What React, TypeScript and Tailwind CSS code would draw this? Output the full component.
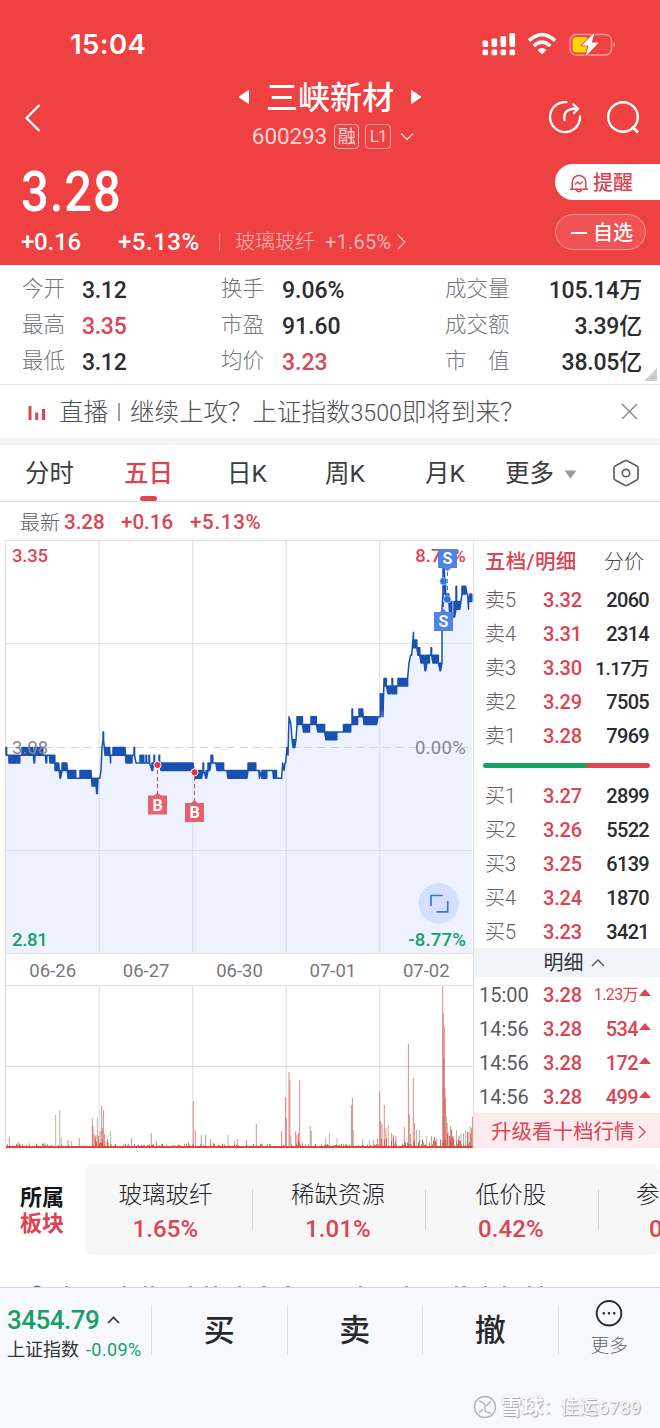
import React from "react";

interface Stat {
  label: string;
  value: string;
  up?: boolean;
}

interface Level {
  label: string;
  price: string;
  volume: string;
}

const STATS: Stat[][] = [
  [
    { label: "今开", value: "3.12" },
    { label: "换手", value: "9.06%" },
    { label: "成交量", value: "105.14万" },
  ],
  [
    { label: "最高", value: "3.35", up: true },
    { label: "市盈", value: "91.60" },
    { label: "成交额", value: "3.39亿" },
  ],
  [
    { label: "最低", value: "3.12" },
    { label: "均价", value: "3.23", up: true },
    { label: "市　值", value: "38.05亿" },
  ],
];

const SELLS: Level[] = [
  { label: "卖5", price: "3.32", volume: "2060" },
  { label: "卖4", price: "3.31", volume: "2314" },
  { label: "卖3", price: "3.30", volume: "1.17万" },
  { label: "卖2", price: "3.29", volume: "7505" },
  { label: "卖1", price: "3.28", volume: "7969" },
];

const BUYS: Level[] = [
  { label: "买1", price: "3.27", volume: "2899" },
  { label: "买2", price: "3.26", volume: "5522" },
  { label: "买3", price: "3.25", volume: "6139" },
  { label: "买4", price: "3.24", volume: "1870" },
  { label: "买5", price: "3.23", volume: "3421" },
];

const TRADES = [
  { time: "15:00", volume: "1.23万", small: true },
  { time: "14:56", volume: "534" },
  { time: "14:56", volume: "172" },
  { time: "14:56", volume: "499" },
];

const SECTORS = [
  { name: "玻璃玻纤", change: "1.65%" },
  { name: "稀缺资源", change: "1.01%" },
  { name: "低价股", change: "0.42%" },
];

// [x start, x end, low tick, high tick]; one tick is 0.01 away from 3.08
const SEGMENTS: number[][] = [
  [6, 7, -1, 0], [7, 9, -1, -1], [9, 20, -2, -1], [20, 22, -1, -1], [22, 27, -1, 0],
  [28, 33, -1, 0], [34, 34.6, -2, -1], [35, 43, -1, 0], [43, 46, -1, -1], [46, 46.6, -2, -1],
  [47, 50, -1, -1], [50, 55, -2, -1], [55, 59, -3, -2], [60, 61, -4, -3], [62, 67, -3, -2],
  [68, 76, -4, -3], [76, 80, -4, -4], [80, 84, -4, -3], [85, 91, -4, -3], [92, 96, -5, -4],
  [96.7, 97.4, -6, -4], [98, 100, -4, -4], [101, 101, -3, -3], [102, 102, 0, 0],
  [103, 104, 1, 2], [105, 106, -1, 0], [106, 110, -1, 0], [110.6, 111, -2, -1], [113, 125, -1, 0],
  [126, 132, -2, -1], [134, 135, -1, 0], [136, 139, -2, -2], [140, 141, -2, -1], [142, 144, -2, -1],
  [146, 147, -2, -1], [149, 150, -2, -1], [152, 153, -3, -2], [154, 155, -2, -1], [157, 158, -2, -2],
  [159, 160, -2, -1], [161, 165, -3, -2], [166, 169, -3, -2], [170, 174, -3, -2], [175, 193, -3, -2],
  [195, 202, -4, -3], [203, 204, -3, -2], [206, 206.6, -4, -3], [208, 210, -3, -2], [211, 213, -2, -1],
  [214, 216, -2, -2], [217, 224, -3, -2], [225, 227, -3, -3], [228, 237, -4, -3], [238, 243, -4, -3],
  [244, 247, -4, -3], [248, 256, -3, -2], [257, 259, -3, -3], [259.5, 260, -4, -3], [262, 267, -4, -3],
  [268, 273, -3, -3], [273.5, 277, -4, -3], [278, 282, -4, -4], [282.7, 283, -2, -2], [284, 284, -3, -3],
  [285, 286, -2, -2], [287, 287, 0, 0], [288, 288, -1, -1], [289, 289, 4, 4], [291, 291, 3, 3],
  [292, 292, 1, 1], [293, 295, 0, 1], [296, 296, 1, 1], [297, 303, 3, 4], [303.5, 310, 2, 3],
  [311, 317, 3, 4], [318, 325, 2, 3], [326, 331, 1, 2], [332, 337, 1, 2], [338, 343, 2, 2],
  [343.5, 351, 2, 3], [352, 352.6, 3, 5], [354, 358, 3, 4], [359, 363, 4, 5], [364, 377, 3, 4],
  [378, 379, 4, 4], [380.3, 381, 4, 7], [382, 382.6, 7, 5], [383, 383, 4, 4], [384, 387, 9, 8],
  [388, 391, 7, 8], [392, 392.6, 7, 9], [393, 397, 7, 8], [398, 408, 8, 9], [409, 409, 11, 11],
  [410.5, 412, 12, 12], [413.5, 414, 15, 13], [415, 417, 13, 14], [418, 420, 12, 13], [421, 424, 11, 12],
  [425, 426, 10, 12], [427, 430, 11, 12], [431, 431.6, 12, 13], [433, 439, 11, 12], [440, 440.6, 10, 11],
  [442, 442.4, 11, 18], [443, 444.4, 20, 24], [445, 446, 20, 22], [447, 449, 19, 20], [450, 452, 17, 19],
  [454, 454.6, 17, 19], [456, 456.6, 18, 21], [458, 460, 18, 19], [462, 466, 20, 21], [467, 468, 20, 20],
  [468.5, 469, 18, 19], [470, 472, 20, 19],
];

const tickY = (tick: number) => 207.5 - tick * 7.68;

const buildLine = () => {
  const points: string[] = [];
  SEGMENTS.forEach(([x0, x1, a, b]) => {
    let flip = false;
    for (let x = x0; x <= x1; x += 0.6) {
      points.push(`${x.toFixed(1)},${tickY(flip ? b : a).toFixed(1)}`);
      if (a !== b) {
        points.push(`${x.toFixed(1)},${tickY(flip ? a : b).toFixed(1)}`);
      }
      flip = !flip;
    }
  });
  return points.join(" ");
};

// [x, height, falling]
const SPIKES: number[][] = [
  [9.3, 11], [18.3, 6], [29.3, 5], [44.3, 5], [55.7, 33, 1], [59.7, 38, 1], [61.3, 10, 1], [68, 8], [71.3, 7, 1],
  [79.3, 10], [92.3, 30], [93, 22], [94, 14], [95, 12], [96, 13], [97.4, 30, 1], [98.5, 12], [100, 17], [101.7, 42],
  [102.3, 20], [103.4, 38], [104.5, 14], [106, 7, 1], [108, 6], [110.6, 17, 1], [131.6, 10], [151.3, 15], [156.6, 7],
  [162, 4], [188.6, 6], [193.3, 47], [195.3, 18], [201.3, 13], [205.6, 13], [210.6, 9], [213.3, 5], [228, 13, 1],
  [234.3, 7], [237.3, 9], [246.6, 8], [256.3, 24], [267.3, 4], [281.6, 17], [285.4, 51], [286.3, 30], [289, 76],
  [289.9, 68], [291, 12, 1], [295.6, 17], [297, 13], [298.5, 15], [299.7, 68], [310.3, 22], [311.4, 17, 1],
  [325.6, 10, 1], [329.3, 15, 1], [337, 10, 1], [351.6, 43], [352.4, 50], [353.3, 18, 1], [362.6, 9, 1], [369.3, 8, 1],
  [373.3, 8], [377.6, 10], [379.7, 57], [380.6, 27], [382, 24], [384.3, 43], [386, 20], [388.3, 23, 1], [391.6, 15],
  [393.3, 13], [396, 12], [404.3, 21], [408.4, 104], [409.3, 34], [410.6, 14], [413.3, 70], [414.6, 25], [416.6, 18, 1],
  [419.3, 18, 1], [426.6, 12, 1], [431.6, 12], [436.6, 10, 1], [442.7, 162], [443.3, 135], [444.3, 121], [443.8, 90],
  [444.9, 60], [445.6, 50], [446.4, 32, 1], [447.2, 25], [448.3, 15, 1], [450.6, 22], [453.3, 12], [456.6, 18, 1],
  [459, 12], [461, 14, 1], [463.5, 15, 1], [465.6, 18, 1], [468, 16], [470, 22, 1], [471.5, 20], [472.4, 31],
];

const noise = (i: number) => {
  const v = Math.sin(i * 12.9898) * 43758.5453;
  return v - Math.floor(v);
};

const noiseLevel = (x: number) => {
  if (x > 440) return 17;
  if (x > 380) return 10;
  if ((x > 92 && x < 110) || (x > 294 && x < 302)) return 9;
  return 3;
};

const PriceLine: React.FC = () => {
  const line = buildLine();
  return (
    <>
      <polygon points={`6,413 ${line} 472.5,413`} fill="#edf2fe" />
      {[99.2, 192.7, 286.2, 379.7].map((x) => (
        <path key={x} d={`M${x} 0V413.5M${x} 445.5V608`} stroke="#d5d7dd" strokeOpacity="0.8" />
      ))}
      <path d="M5.5 103.5H473M5.5 310.5H473" stroke="#d9dbe0" strokeOpacity="0.8" />
      <path d="M5.5 207.5H473" stroke="#d1d2d7" strokeDasharray="8 5" />
      <path d="M5.5 0.5H473.5V608M5.5 0.5V608M5.5 413.5H473M5.5 445.5H473M5.5 526.5H473" fill="none" stroke="#dddee2" />
      <polyline points={line} fill="none" stroke="#1a50b2" strokeWidth="1.5" strokeLinejoin="round" />
    </>
  );
};

const VolumeBars: React.FC = () => (
  <>
    {Array.from({ length: 466 }, (_, i) => {
      const x = 6.5 + i;
      const h = 1.5 + Math.pow(noise(i), 3) * noiseLevel(x);
      return (
        <path
          key={i}
          d={`M${x} 608V${608 - h}`}
          stroke={noise(i + 900) > 0.68 ? "#94a070" : "#de5650"}
          strokeWidth="0.9"
        />
      );
    })}
    {SPIKES.map(([x, h, falling]) => (
      <path
        key={x}
        d={`M${x} 608V${608 - h}`}
        stroke={falling ? "#8b9a70" : "#cf544f"}
        strokeOpacity="0.85"
        strokeWidth="0.8"
      />
    ))}
    <path d="M6 607H472.5" stroke="#dc463d" strokeWidth="1.8" />
  </>
);

const Marker: React.FC<{ x: number; y: number; letter: string; below?: boolean }> = ({ x, y, letter, below }) => {
  const isBuy = letter === "B";
  return (
    <g>
      <rect x={x - 9.5} y={y - 9.5} width="19" height="19" fill={isBuy ? "#e8606e" : "#4c84e8"} />
      <path
        d={below ? `M${x - 4} ${y + 9}h8l-4 4z` : `M${x - 4} ${y - 9}h8l-4 -3.5z`}
        fill={isBuy ? "#e8606e" : "#4c84e8"}
      />
      <text x={x} y={y + 5.5} fill="#fff" fontSize="16" fontWeight="700" textAnchor="middle" fontFamily="Roboto">
        {letter}
      </text>
    </g>
  );
};

const Chart: React.FC = () => (
  <div className="relative w-[474px] h-[608px] shrink-0 text-[18.5px] leading-[20px] font-medium">
    <svg className="block w-[474px] h-[608px]" viewBox="0 0 474 608">
      <PriceLine />
      <VolumeBars />
    </svg>
    <span className="absolute left-[12px] top-[6px] text-[#dc4452] tracking-[-0.2px]">3.35</span>
    <span className="absolute right-[8px] top-[6px] text-[#dc4452] tracking-[0.1px]">8.77%</span>
    <span className="absolute left-[12px] top-[198px] text-[#85868a] font-normal">3.08</span>
    <span className="absolute right-[8px] top-[198px] text-[#85868a] font-normal tracking-[0.3px]">0.00%</span>
    <span className="absolute left-[12px] top-[390px] text-[#16a066] tracking-[-0.3px]">2.81</span>
    <span className="absolute right-[8px] top-[390px] text-[#16a066] tracking-[0.2px]">-8.77%</span>
    <svg className="absolute left-0 top-0 w-[474px] h-[414px]" viewBox="0 0 474 414">
      <path d="M157.5 230v24M194.5 237v24" stroke="#dc4452" strokeDasharray="4 3" />
      <circle cx="157.5" cy="225" r="3.6" fill="#e5333f" stroke="#fff" />
      <circle cx="194.5" cy="232.3" r="3.6" fill="#e5333f" stroke="#fff" />
      <Marker x={157.5} y={265} letter="B" />
      <Marker x={194.5} y={272.5} letter="B" />
      <path d="M447.5 32v26" stroke="#3d78e0" strokeDasharray="4 3" />
      <path d="M443.5 20v50" stroke="#2461cc" strokeDasharray="5 2" />
      <circle cx="443.5" cy="41.3" r="3.7" fill="#2f73e0" stroke="#cfe0fb" strokeWidth="0.6" />
      <circle cx="447.3" cy="59.3" r="3.7" fill="#2f73e0" stroke="#cfe0fb" strokeWidth="0.6" />
      <Marker x={447.5} y={18.5} letter="S" below />
      <Marker x={443.5} y={81.5} letter="S" />
      <circle cx="438.7" cy="363.5" r="20.2" fill="#d4e0fc" />
      <path d="M431 366V355.5H442.5M436.5 371.8H447.7V361" fill="none" stroke="#3f74dc" strokeWidth="1.7" />
    </svg>
    <div className="absolute left-[6px] top-[415px] w-[467px] h-[32px] grid grid-cols-5 items-center text-center text-[18.5px] text-[#77787c] font-normal">
      {["06-26", "06-27", "06-30", "07-01", "07-02"].map((date) => (
        <span key={date}>{date}</span>
      ))}
    </div>
  </div>
);

const LevelRow: React.FC<{ level: Level }> = ({ level }) => (
  <div className="flex items-center h-[34px] pl-[11px] pr-[11px] text-[20px] leading-none">
    <span className="w-[58px] text-[#5f6064] font-light">{level.label}</span>
    <span className="text-[#dc4452] font-medium tracking-[-0.2px]">{level.price}</span>
    <span
      className={`ml-auto text-[#2b2c30] font-medium ${
        level.volume.includes("万") ? "text-[19px] tracking-[-0.6px]" : "tracking-[-0.7px]"
      }`}
    >
      {level.volume}
    </span>
  </div>
);

const OrderBook: React.FC = () => (
  <div className="flex flex-col w-[186px] h-[608px] border-t border-[#e2e3e6]">
    <div className="flex items-center justify-between h-[42px] pl-[11px] pr-[16px] text-[20px]">
      <span className="text-[#dc4452] font-medium text-[20.5px] tracking-[0.3px]">五档/明细</span>
      <span className="text-[#4b4c50] font-light">分价</span>
    </div>
    {SELLS.map((level) => (
      <LevelRow key={level.label} level={level} />
    ))}
    <div className="flex items-center h-[26px] pl-[9px] pr-[10px] pb-[2px]">
      <div className="h-[5px] w-[104px] rounded-l-full bg-[#16a362]" />
      <div className="h-[5px] flex-1 rounded-r-full bg-[#e04650]" />
    </div>
    {BUYS.map((level) => (
      <LevelRow key={level.label} level={level} />
    ))}
    <div className="flex items-center justify-center gap-[7px] h-[29px] -mt-[1px] pl-[14px] pt-[1px] bg-[#f0f3f8] text-[20px] leading-none text-[#333438]">
      明细
      <svg className="w-[14px] h-[8px]" viewBox="0 0 14 8">
        <path d="M1 7L7 1L13 7" fill="none" stroke="#55565a" strokeWidth="1.4" />
      </svg>
    </div>
    {TRADES.map((trade) => (
      <div key={trade.volume} className="flex items-center h-[34px] pl-[5px] pr-[9px] pt-[2px] text-[20px] leading-none">
        <span className="w-[64px] text-[#5a5b5f]">{trade.time}</span>
        <span className="text-[#dc4452] font-medium tracking-[-0.2px]">3.28</span>
        <span
          className={`ml-auto text-[#dc4452] ${
            trade.small ? "text-[16px] tracking-[-0.6px]" : "font-medium tracking-[-0.6px]"
          }`}
        >
          {trade.volume}
        </span>
        <svg className="w-[12px] h-[7px] ml-[1px] mb-[6px]" viewBox="0 0 12 7">
          <path d="M0 7L6 0L12 7Z" fill="#e04450" />
        </svg>
      </div>
    ))}
    <div className="flex items-center flex-1 pl-[17px] pt-[3px] bg-[#feebed] text-[20.5px] leading-none text-[#dc4452]">
      升级看十档行情
      <svg className="w-[8px] h-[14px] ml-[3px]" viewBox="0 0 8 14">
        <path d="M1 1L7 7L1 13" fill="none" stroke="#dc4452" strokeWidth="1.4" />
      </svg>
    </div>
  </div>
);

const StatusIcons: React.FC = () => (
  <svg className="w-[136px] h-[26px]" viewBox="0 0 136 26">
    <g fill="#fff">
      <rect x="0.500" y="9.5" width="5.6" height="6.5" rx="1.4" />
      <rect x="9.500" y="7.5" width="5.6" height="8.5" rx="1.4" />
      <rect x="18.500" y="5" width="5.6" height="11" rx="1.4" />
      <rect x="27.500" y="2" width="5.6" height="14" rx="1.4" />
      <rect x="0.500" y="18.5" width="5.6" height="5.8" rx="1.4" />
      <rect x="9.500" y="18.5" width="5.6" height="5.8" rx="1.4" />
      <rect x="18.500" y="18.5" width="5.6" height="5.8" rx="1.4" />
      <rect x="27.500" y="18.5" width="5.6" height="5.8" rx="1.4" />
    </g>
    <g fill="none" stroke="#fff" strokeWidth="3.6">
      <path d="M47 9.700Q60 -2.500 73 9.700" />
      <path d="M51.700 15Q60 7.300 68.300 15" />
    </g>
    <path d="M60 23.5L55.500 19Q60 15.2 64.500 19Z" fill="#fff" />
    <rect x="88" y="3.5" width="41.5" height="20.5" rx="6" fill="none" stroke="#f6999b" strokeWidth="1.4" />
    <path d="M131.5 10.5q3 3.2 0 6.6z" fill="#f6999b" />
    <rect x="90.5" y="6" width="16" height="15.6" rx="3.5" fill="#ffd60a" />
    <path
      d="M112.5 1.5L99.5 14.5H106.5L103.5 25.5L117 11.5H109.8Z"
      fill="#fff"
      stroke="#ef4042"
      strokeWidth="1.6"
      strokeLinejoin="round"
      paintOrder="stroke"
    />
  </svg>
);

const Header: React.FC = () => (
  <header className="h-[265px] bg-[#ef4042] text-white">
    <div className="flex items-center justify-between h-[86px] pl-[70px] pr-[42px] pt-[2px]">
      <span className="mt-[2px] font-[Inter] font-semibold text-[27.5px] leading-none tracking-[0.4px]">15:04</span>
      <StatusIcons />
    </div>

    <div className="flex items-center h-[66px] pl-[24px] pr-[20px]">
      <svg className="w-[18px] h-[30px] mt-[-3px]" viewBox="0 0 18 30">
        <path d="M15.5 2L2.5 15L15.5 28" fill="none" stroke="#fff" strokeWidth="2.3" />
      </svg>
      <div className="flex flex-1 flex-col items-center pl-[74px] pr-[4px]">
        <div className="flex items-center gap-[17px] h-[26px]">
          <svg className="w-[11px] h-[16px] mt-[-9px]" viewBox="0 0 11 16">
            <path d="M10.5 1.5v13L1 8z" fill="#fff" stroke="#fff" strokeLinejoin="round" />
          </svg>
          <h1 className="text-[32px] leading-none font-medium mt-[-8px]">三峡新材</h1>
          <svg className="w-[11px] h-[16px] mt-[-9px]" viewBox="0 0 11 16">
            <path d="M0.5 1.5v13L10 8z" fill="#fff" stroke="#fff" strokeLinejoin="round" />
          </svg>
        </div>
        <div className="flex items-center h-[26px] mt-[9px] pl-[6px] text-[#fcd6d7]">
          <span className="text-[22.5px] leading-none tracking-[-0.1px]">600293</span>
          <span className="flex items-center justify-center w-[25px] h-[25px] ml-[7px] rounded-[4px] border border-[#f8b4b5] text-[18px] leading-none">
            融
          </span>
          <span className="flex items-center justify-center w-[26px] h-[25px] ml-[6px] rounded-[4px] border border-[#f6a0a2] text-[17px] leading-none tracking-[-1px]">
            L1
          </span>
          <svg className="w-[14px] h-[9px] ml-[9px]" viewBox="0 0 14 9">
            <path d="M1 1.5L7 7.5L13 1.5" fill="none" stroke="#fcd6d7" strokeWidth="1.5" />
          </svg>
        </div>
      </div>
      <div className="flex items-center gap-[24px] mt-[-5px]">
        <svg className="w-[34px] h-[34px]" viewBox="0 0 34 34" fill="none" stroke="#fff" strokeWidth="2.3">
          <path d="M18.2 2.1A15 15 0 1 0 32 16.3" strokeLinecap="round" />
          <path d="M16.500 20C15.300 13 18.500 8.500 29 8.500" strokeLinecap="round" />
          <path d="M25.5 4.500L30 8.700L26 13" strokeLinejoin="round" strokeLinecap="round" />
        </svg>
        <svg className="w-[34px] h-[34px]" viewBox="0 0 34 34" fill="none" stroke="#fff" strokeWidth="2.4">
          <circle cx="17" cy="17" r="14.8" />
          <path d="M26 26.500L32 32.5" strokeWidth="3" />
        </svg>
      </div>
    </div>

    <div className="flex justify-between pt-[12px]">
      <div className="pl-[21px]">
        <div className="h-[54px] text-[55px] leading-[56px] font-medium tracking-[1px] origin-left scale-x-[0.89]">3.28</div>
        <div className="flex items-center h-[30px] mt-[9px] text-[24px] leading-none font-medium">
          <span className="w-[97px] tracking-[-0.2px]">+0.16</span>
          <span className="w-[101px] tracking-[0.5px]">+5.13%</span>
          <div className="flex items-center h-[18px] pl-[15px] border-l border-[#f58c8e] text-[20px] font-light text-[#f9b4b5]">
            玻璃玻纤
            <span className="ml-[10px] text-[20px] tracking-[0.2px] font-normal">+1.65%</span>
            <svg className="w-[9px] h-[16px] ml-[6px]" viewBox="0 0 9 16">
              <path d="M1 1L8 8L1 15" fill="none" stroke="#f9b4b5" strokeWidth="1.3" />
            </svg>
          </div>
        </div>
      </div>
      <div className="flex flex-col gap-[14px] w-[105px]">
        <button className="flex items-center gap-[4px] h-[36px] pl-[14px] pt-[1px] rounded-l-full bg-white text-[#dc4452] text-[20px] leading-none font-medium">
          <svg className="w-[20px] h-[20px]" viewBox="0 0 20 20" fill="none" stroke="#dc4452" strokeWidth="1.5">
            <path d="M3.2 16V9.2A6.8 6.8 0 0 1 16.8 9.2V16M1 16.2H19M7 16.5Q10 21 13 16.5" />
            <path d="M6 11.5L8.7 9L10.8 11L13.6 8.4" strokeWidth="1.3" />
          </svg>
          提醒
        </button>
        <button className="flex items-center gap-[6px] w-[91px] h-[36px] pl-[15px] pt-[1px] rounded-full border border-[#f69b9c] bg-[#f15355] text-[20px] leading-none font-medium">
          <span className="w-[16px] h-[2px] bg-white" />
          自选
        </button>
      </div>
    </div>
  </header>
);

const StatGrid: React.FC = () => (
  <section className="relative h-[120px] pt-[7px] border-b border-[#e4e5e8]">
    {STATS.map((row) => (
      <div key={row[0].label} className="flex items-center h-[36px] pl-[22px] pr-[18px] text-[21.5px] leading-none">
        {row.map((stat, i) => (
          <React.Fragment key={stat.label}>
            <span
              className={`font-light text-[#76777b] mt-[-2px] whitespace-pre ${
                i === 0 ? "w-[60px]" : i === 1 ? "w-[61px]" : ""
              }`}
            >
              {stat.label}
            </span>
            <span
              className={`text-[23px] font-medium ${stat.up ? "text-[#dc4452]" : "text-[#2b2c30]"} ${
                i === 0 ? "w-[139px] tracking-[-0.3px]" : i === 1 ? "w-[163px]" : "ml-auto tracking-[-0.2px]"
              }`}
            >
              {stat.value}
            </span>
          </React.Fragment>
        ))}
      </div>
    ))}
    <svg className="absolute right-[3px] bottom-[3px] w-[13px] h-[13px]" viewBox="0 0 13 13">
      <path d="M13 0V13H0Z" fill="#cbccd0" />
    </svg>
  </section>
);

const LiveBanner: React.FC = () => (
  <section className="flex items-center h-[53px] pl-[27px] pr-[22px]">
    <svg className="w-[20px] h-[16px] mt-[3px]" viewBox="0 0 20 16">
      <path d="M3 1V15M9.7 7.500V15M16.5 4V15" stroke="#dc4452" strokeWidth="3" />
    </svg>
    <span className="flex ml-[12px] mt-[3px] text-[24.5px] leading-none font-light text-[#4f5054] whitespace-nowrap">
      <span>直播</span>
      <span className="w-[22px] text-[20px] leading-[25px] text-center">丨</span>
      <span>
        继续上攻？上证指数<span className="text-[23.2px]">3500</span>即将到来？
      </span>
    </span>
    <svg className="w-[17px] h-[17px] ml-auto" viewBox="0 0 17 17">
      <path d="M1 1L16 16M16 1L1 16" stroke="#8b8c90" strokeWidth="1.5" />
    </svg>
  </section>
);

const PeriodTabs: React.FC = () => (
  <nav className="relative flex items-center h-[57px] pl-[25px] pt-[3px] border-b border-[#dfe0e4] text-[24.5px] leading-none text-[#3c3d41] whitespace-nowrap">
    <span className="w-[99px]">分时</span>
    <span className="w-[103px] font-medium text-[#dc4452]">五日</span>
    <span className="w-[98px]">日K</span>
    <span className="w-[100px]">周K</span>
    <span className="w-[80px]">月K</span>
    <span>更多</span>
    <svg className="w-[13px] h-[9px] ml-[10px]" viewBox="0 0 13 9">
      <path d="M0.5 0.5H12.5L6.5 8.5Z" fill="#98999d" />
    </svg>
    <svg className="w-[26px] h-[28px] ml-[36px] mt-[-4px]" viewBox="0 0 26 28" fill="none" stroke="#5f6064" strokeWidth="1.7">
      <path d="M11.8 1.7Q13 1 14.2 1.7L23.8 7Q25 7.7 25 9V19Q25 20.3 23.8 21L14.2 26.3Q13 27 11.8 26.3L2.2 21Q1 20.3 1 19V9Q1 7.7 2.2 7Z" />
      <circle cx="13" cy="14" r="3.7" />
    </svg>
    <span className="absolute left-[140px] bottom-0 w-[17px] h-[5px] rounded-full bg-[#e0434e]" />
  </nav>
);

const Sectors: React.FC = () => (
  <section className="flex h-[91px] mt-[16px]">
    <div className="w-[85px] shrink-0 pl-[20px] pt-[21px] text-[22px] leading-[26px] font-bold">
      <div className="text-[#161619]">所属</div>
      <div className="text-[#dc4452]">板块</div>
    </div>
    <div className="flex flex-1 min-w-0 overflow-hidden rounded-[8px] bg-[#f7f7f8]">
      {SECTORS.map((sector, i) => (
        <React.Fragment key={sector.name}>
          <div
            className={`flex flex-col shrink-0 items-center pt-[19px] ${i === 0 ? "w-[167px] pr-[6px]" : "w-[172px] pr-[2px]"}`}
          >
            <span className="text-[23.5px] leading-[25px] font-light text-[#222327]">{sector.name}</span>
            <span className="mt-[7px] text-[24px] leading-[28px] font-medium text-[#dc4452] tracking-[0.1px]">
              {sector.change}
            </span>
          </div>
          <div className="w-px h-[41px] mt-[25px] shrink-0 bg-[#d3d4d8]" />
        </React.Fragment>
      ))}
      <div className="w-[172px] shrink-0 pt-[19px] pl-[37px] whitespace-nowrap">
        <div className="text-[23.5px] leading-[25px] font-light text-[#222327]">参</div>
        <div className="mt-[7px] pl-[13px] text-[24px] leading-[28px] font-medium text-[#dc4452]">0</div>
      </div>
    </div>
  </section>
);

const TradeBar: React.FC = () => (
  <footer className="h-[141px] border-t border-[#d6d7db] bg-[#f8f9fe]">
    <div className="flex items-center h-[84px]">
      <div className="w-[151px] pl-[7px] pt-[10px]">
        <div className="flex items-center gap-[8px] text-[26px] leading-[30px] font-medium text-[#16a066]">
          <span className="tracking-[-0.5px]">3454.79</span>
          <svg className="w-[13px] h-[8px]" viewBox="0 0 13 8">
            <path d="M1 7L6.5 1.5L12 7" fill="none" stroke="#333438" strokeWidth="1.7" />
          </svg>
        </div>
        <div className="flex items-center gap-[7px] text-[18px] leading-[30px] text-[#333438] whitespace-nowrap">
          <span>上证指数</span>
          <span className="text-[#16a066] tracking-[0.4px]">-0.09%</span>
        </div>
      </div>
      {["买", "卖", "撤"].map((action) => (
        <button
          key={action}
          className="w-[135.5px] h-[50px] border-l border-[#dddee4] text-[31px] leading-none font-medium text-[#27282c]"
        >
          {action}
        </button>
      ))}
      <button className="flex flex-1 flex-col items-center h-[50px] border-l border-[#dddee4] text-[18.5px] leading-none font-light text-[#5f6064]">
        <svg className="w-[28px] h-[28px] mt-[-5px]" viewBox="0 0 28 28">
          <circle cx="14" cy="14" r="13" fill="none" stroke="#27282c" strokeWidth="2" />
          <path d="M8.5 14h.01M14 14h.01M19.5 14h.01" stroke="#27282c" strokeWidth="2.8" strokeLinecap="round" />
        </svg>
        <span className="mt-[10px]">更多</span>
      </button>
    </div>
    <div className="flex items-center justify-end h-[26px] mt-[22px] pr-[19px] text-[#fdfdff] [text-shadow:1px_1px_1px_#9fa0a8,0_0_1px_#b4b5bc] leading-none">
      <svg className="w-[24px] h-[24px] mr-[3px]" viewBox="0 0 24 24" fill="none" stroke="#b4b5bc" strokeWidth="1.4">
        <circle cx="12" cy="12" r="10.5" />
        <path d="M6 6Q13 8 12 13T18 18M18 6L13 11M6 18L10 14" />
      </svg>
      <span className="font-bold text-[21.5px]">雪球</span>
      <span className="text-[17px]">：</span>
      <span className="text-[19px] whitespace-nowrap">佳运6789</span>
    </div>
  </footer>
);

const App: React.FC = () => (
  <div className="w-[660px] h-[1428px] overflow-hidden bg-white font-[Roboto,'Noto_Sans_CJK_SC',sans-serif]">
    <Header />
    <StatGrid />
    <LiveBanner />
    <div className="h-[7px] bg-[#f2f4f8]" />
    <PeriodTabs />
    <div className="flex items-center h-[38px] pl-[20px] pt-[3px] text-[20.5px] leading-none font-medium text-[#dc4452]">
      <span className="w-[44px] text-[20px] font-light text-[#5f6064]">最新</span>
      <span className="w-[57px]">3.28</span>
      <span className="w-[69px]">+0.16</span>
      <span className="tracking-[0.7px]">+5.13%</span>
    </div>
    <div className="flex">
      <Chart />
      <OrderBook />
    </div>
    <Sectors />
    {/* top edge of the next card, hidden behind the trade bar */}
    <svg className="block w-[660px] h-[32px]" viewBox="0 0 660 32">
      <circle cx="37" cy="37.5" r="7" fill="#4a72ad" />
      <path
        d="M65 31.5h3M123 31.5h3M144 31.5h3M151 31.5h3M189 31.5h3M205 31.5h3M214 31.5h3M238 31.5h3M262 31.5h4M286 31.5h4M359 31.5h3M405 31.5h3M455 31.5h3M462 31.5h4M484 31.5h3M503 31.5h3M528 31.5h3M540 31.5h3"
        stroke="#a2a3a7"
      />
    </svg>
    <TradeBar />
  </div>
);

export default App;
